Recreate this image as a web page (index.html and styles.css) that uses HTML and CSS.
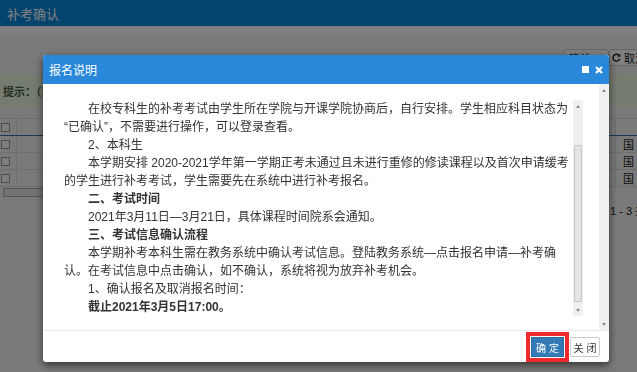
FILE: index.html
```html
<!DOCTYPE html>
<html>
<head>
    <meta charset="utf-8">
    <title>补考确认</title>
    <link rel="stylesheet" href="styles.css">
</head>
<body>
    <div class="page">
        <div class="topbar"><span class="topbar-title">补考确认</span></div>
        <div class="subbar"></div>
        <div class="toolbar">
            <button class="tool-btn">确认</button>
            <button class="tool-btn tool-last">
                <svg class="tool-icon" width="9" height="9" viewBox="0 0 10 10"><path d="M8.2 3.2A3.8 3.8 0 1 0 8.6 6.4" fill="none" stroke="#222" stroke-width="1.6"/><path d="M9.4 0.8V4.2H6z" fill="#222"/></svg>取消
            </button>
        </div>
        <div class="tip">提示：（当前学期补考确认信息）</div>
        <table class="grid">
            <tr class="grid-head">
                <td class="chk"><span class="box"></span></td>
                <td></td>
                <td class="last"></td>
            </tr>
            <tr>
                <td class="chk"><span class="box"></span></td>
                <td></td>
                <td class="last">国</td>
            </tr>
            <tr>
                <td class="chk"><span class="box"></span></td>
                <td></td>
                <td class="last">国</td>
            </tr>
            <tr>
                <td class="chk"><span class="box"></span></td>
                <td></td>
                <td class="last">国</td>
            </tr>
        </table>
        <div class="hscroll"></div>
        <div class="pager">1 - 3 共</div>
    </div>

    <div class="mask"></div>

    <div class="modal">
        <div class="modal-head">
            <span class="modal-title">报名说明</span>
            <span class="icon-max"></span>
            <svg class="icon-close" width="8" height="8" viewBox="0 0 8 8"><path d="M1 1L7 7M7 1L1 7" stroke="#fff" stroke-width="2.2"/></svg>
        </div>
        <div class="modal-body">
            <div class="body-main">
                <div class="notice">
                    <p>在校专科生的补考考试由学生所在学院与开课学院协商后，自行安排。学生相应科目状态为<wbr>“已确认”，不需要进行操作，可以登录查看。</p>
                    <p>2、本科生</p>
                    <p>本学期安排 2020-2021学年第一学期正考未通过且未进行重修的修读课程以及首次申请缓考的学生进行补考考试，学生需要先在系统中进行补考报名。</p>
                    <p><b>二、考试时间</b></p>
                    <p>2021年3月11日—3月21日，具体课程时间院系会通知。</p>
                    <p><b>三、考试信息确认流程</b></p>
                    <p>本学期补考本科生需在教务系统中确认考试信息。登陆教务系统—点击报名申请—补考确认。在考试信息中点击确认，如不确认，系统将视为放弃补考机会。</p>
                    <p>1、确认报名及取消报名时间：</p>
                    <p><b>截止2021年3月5日17:00。</b></p>
                </div>
                <div class="scroll">
                    <span class="arrow"><i class="up"></i></span>
                    <span class="track inner-track"><span class="thumb"></span></span>
                    <span class="arrow"><i class="down"></i></span>
                </div>
            </div>
            <div class="scroll">
                <span class="arrow"><i class="up"></i></span>
                <span class="track"></span>
                <span class="arrow"><i class="down"></i></span>
            </div>
        </div>
        <div class="modal-foot">
            <button class="btn btn-ok">确 定</button>
            <button class="btn btn-close">关 闭</button>
        </div>
    </div>
</body>
</html>
```

FILE: styles.css
```css
html, body {
    margin: 0;
    overflow: hidden;
}
body {
    font-family: "Liberation Sans", "Noto Sans CJK SC", sans-serif;
    background-color: #f4f4f4;
}
.page {
    width: 680px;
}
.topbar {
    height: 26px;
    background-color: #0688dc;
    display: flex;
    align-items: center;
    padding-left: 7px;
}
.topbar-title {
    color: #fff;
    font-size: 13px;
}
.subbar {
    height: 9px;
    background-color: #fff;
}
.toolbar {
    height: 40px;
    box-sizing: border-box;
    padding: 14px 0 0 563px;
    display: flex;
    align-items: flex-start;
}
.tool-btn {
    height: 17px;
    min-width: 46px;
    padding: 0 5px;
    border: 1px solid #ccc;
    border-radius: 3px;
    background-color: #fff;
    color: #222;
    font-family: inherit;
    font-size: 11px;
    display: flex;
    align-items: center;
    gap: 3px;
}
.tool-last {
    padding: 0 2px;
}
.tip {
    height: 32px;
    margin-bottom: 11px;
    padding-left: 3px;
    background-color: #e9f6df;
    color: #4a5a3a;
    font-size: 11px;
    font-weight: bold;
    display: flex;
    align-items: center;
}
.grid {
    width: 100%;
    border-collapse: collapse;
    font-size: 11px;
    color: #222;
}
.grid td {
    height: 16px;
    padding: 0;
    border: 1px solid #ddd;
    border-top: 0;
}
.grid .grid-head td {
    border-top: 1px solid #ddd;
    border-bottom: 1px solid #3a6fb0;
}
.grid .chk {
    width: 16px;
    border-left: 0;
}
.grid .last {
    width: 56px;
    padding-left: 7px;
    white-space: nowrap;
}
.box {
    display: block;
    width: 7px;
    height: 7px;
    margin-left: 1px;
    border: 1px solid #999;
    background-color: #fff;
}
.hscroll {
    width: 300px;
    height: 7px;
    margin: 1px 0 0 3px;
    border: 1px solid #aaa;
    background-color: #e6e6e6;
}
.pager {
    padding: 5px 0 0 610px;
    font-size: 11px;
    color: #222;
}

.mask {
    position: fixed;
    inset: 0;
    background-color: rgba(0, 0, 0, 0.5);
}

.modal {
    position: absolute;
    left: 43px;
    top: 55px;
    width: 566px;
    height: 307px;
    display: flex;
    flex-direction: column;
    background-color: #fff;
    border-radius: 3px;
    box-shadow: 0 3px 9px rgba(0, 0, 0, 0.6);
    overflow: hidden;
}
.modal-head {
    height: 29px;
    flex-shrink: 0;
    padding: 0 6px;
    display: flex;
    align-items: center;
    gap: 6px;
    background-color: #2a88db;
    color: #fff;
}
.modal-title {
    flex: 1;
    font-size: 12px;
}
.icon-max {
    width: 7px;
    height: 7px;
    background-color: #fff;
}
.modal-body {
    flex: 1;
    display: flex;
    min-height: 0;
}
.body-main {
    flex: 1;
    min-width: 0;
    display: flex;
    padding: 16px 16px 14px 21px;
}
.notice {
    flex: 1;
    overflow: hidden;
    font-size: 12px;
    line-height: 18px;
    color: #333;
}
.notice p {
    margin: 0;
    text-indent: 24px;
}
.scroll {
    width: 10px;
    flex-shrink: 0;
    display: flex;
    flex-direction: column;
    background-color: #f0f0f0;
}
.arrow {
    height: 12px;
    display: flex;
    align-items: center;
    justify-content: center;
}
.arrow i {
    width: 0;
    height: 0;
    border-left: 2px solid transparent;
    border-right: 2px solid transparent;
}
.arrow .up {
    border-bottom: 3px solid #8a8a8a;
}
.arrow .down {
    border-top: 3px solid #8a8a8a;
}
.track {
    flex: 1;
    display: flex;
    flex-direction: column;
}
.inner-track {
    padding: 33px 0 2px;
}
.thumb {
    flex: 1;
    margin: 0 1px;
    border: 1px solid #c6c6c6;
    border-radius: 1px;
    background-color: #e4e4e4;
}
.modal-foot {
    height: 32px;
    flex-shrink: 0;
    box-sizing: border-box;
    padding: 6px 9px 0 0;
    border-top: 1px solid #e8e8e8;
    display: flex;
    justify-content: flex-end;
    align-items: flex-start;
    gap: 6px;
}
.btn {
    height: 20px;
    padding: 0;
    border-radius: 2px;
    font-family: inherit;
    font-size: 10px;
    text-align: center;
}
.btn-ok {
    width: 33px;
    border: 1px solid #2e6da4;
    border-radius: 0;
    background-color: #337ab7;
    color: #fff;
    outline: 4px solid #ee2a2e;
    outline-offset: 1px;
}
.btn-close {
    width: 30px;
    border: 1px solid #ccc;
    background-color: #fff;
    color: #333;
}
```
